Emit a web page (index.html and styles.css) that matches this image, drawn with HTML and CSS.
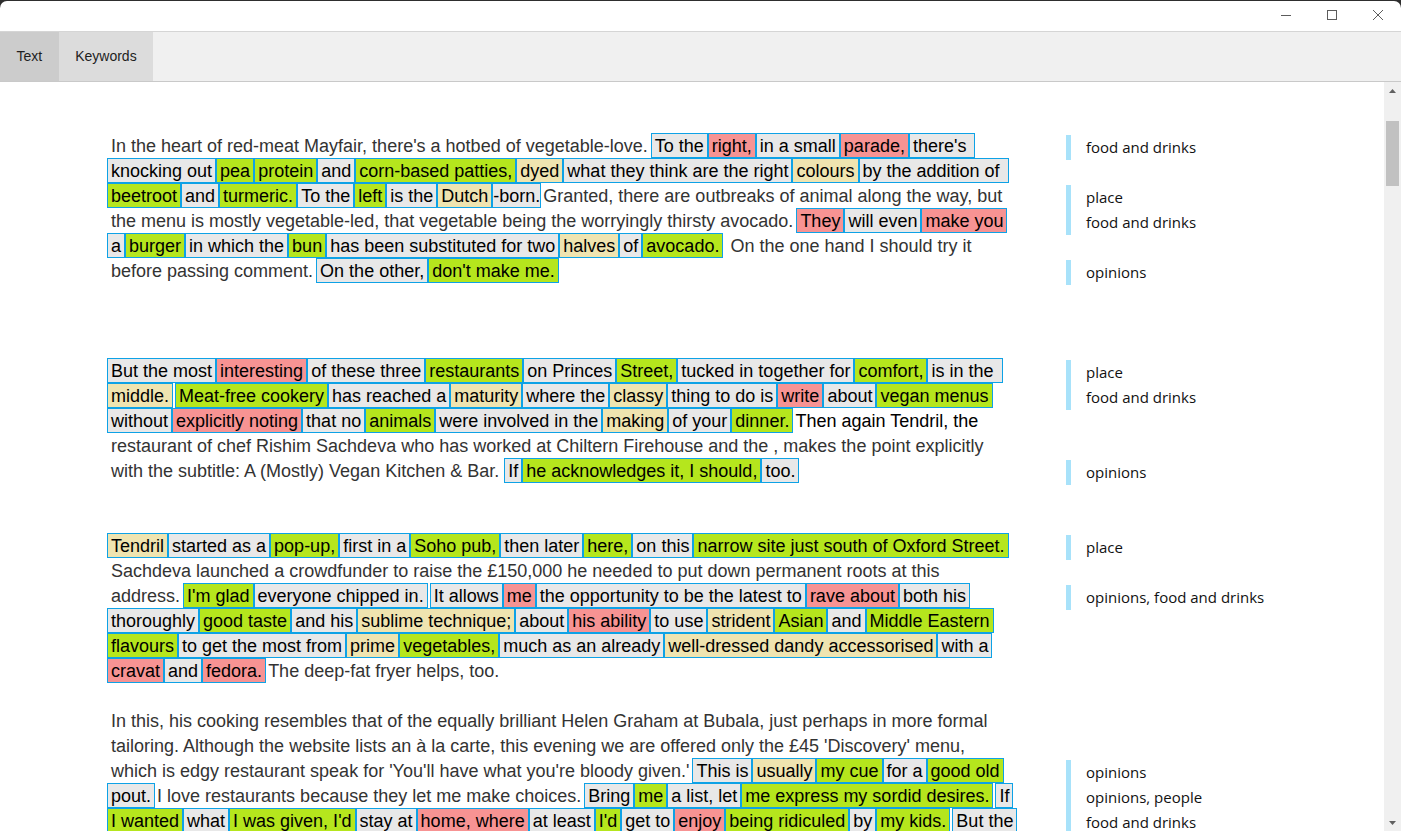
FILE: index.html
```html
<!DOCTYPE html>
<html lang="en">
<head>
<meta charset="utf-8">
<title>Text</title>
<link rel="stylesheet" href="styles.css">
</head>
<body>
<div class="window">
  <div class="titlebar">
    <div class="ctrl"><svg width="10" height="10" viewBox="0 0 10 10"><path d="M0 5.5H10" stroke="#5c5c5c" stroke-width="1" fill="none"/></svg></div>
    <div class="ctrl"><svg width="10" height="10" viewBox="0 0 10 10"><rect x="0.5" y="0.5" width="9" height="9" stroke="#5c5c5c" stroke-width="1" fill="none"/></svg></div>
    <div class="ctrl"><svg width="10" height="10" viewBox="0 0 10 10"><path d="M0 0L10 10M10 0L0 10" stroke="#5c5c5c" stroke-width="1" fill="none"/></svg></div>
  </div>
  <div class="tabs">
    <div class="tab active">Text</div>
    <div class="tab">Keywords</div>
  </div>
  <div class="main">
    <div class="doc">
      <div class="block gap3">
        <p class="text"><span class="p">In the heart of red-meat Mayfair, there's a hotbed of vegetable-love.</span><span class="s">To the</span><span class="r">right,</span><span class="s">in a small</span><span class="r">parade,</span><span class="s">there's&nbsp;</span><br><span class="s">knocking out</span><span class="g">pea</span><span class="g">protein</span><span class="s">and</span><span class="g">corn-based patties,</span><span class="y">dyed</span><span class="s">what they think are the right</span><span class="y">colours</span><span class="s">by the addition of&nbsp;</span><br><span class="g">beetroot</span><span class="s">and</span><span class="g">turmeric.</span><span class="s">To the</span><span class="g">left</span><span class="s">is the</span><span class="y">Dutch</span><span class="s tight">-born.</span><span class="p">Granted, there are outbreaks of animal along the way, but</span><br><span class="p">the menu is mostly vegetable-led, that vegetable being the worryingly thirsty avocado.</span><span class="r">They</span><span class="s">will even</span><span class="r">make you</span><br><span class="s">a</span><span class="g">burger</span><span class="s">in which the</span><span class="g">bun</span><span class="s">has been substituted for two</span><span class="y">halves</span><span class="s">of</span><span class="g">avocado.</span><span class="p">&nbsp;On the one hand I should try it</span><br><span class="p">before passing comment.</span><span class="s">On the other,</span><span class="g">don't make me.</span></p>
        <div class="tags">
          <div class="tag-group"><div class="tag">food and drinks</div></div>
          <div class="tag-group skip1"><div class="tag">place</div><div class="tag">food and drinks</div></div>
          <div class="tag-group skip1"><div class="tag">opinions</div></div>
        </div>
      </div>
      <div class="block gap2">
        <p class="text"><span class="s">But the most</span><span class="r">interesting</span><span class="s">of these three</span><span class="g">restaurants</span><span class="s">on Princes</span><span class="g">Street,</span><span class="s">tucked in together for</span><span class="g">comfort,</span><span class="s">is in the&nbsp;</span><br><span class="y">middle.</span><span class="g ns">Meat-free cookery</span><span class="s">has reached a</span><span class="y">maturity</span><span class="s">where the</span><span class="y">classy</span><span class="s">thing to do is</span><span class="r">write</span><span class="s">about</span><span class="g">vegan menus</span><br><span class="s">without</span><span class="r">explicitly noting</span><span class="s">that no</span><span class="g">animals</span><span class="s">were involved in the</span><span class="y">making</span><span class="s">of your</span><span class="g">dinner.</span><span class="p k">Then again Tendril, the</span><br><span class="p">restaurant of chef Rishim Sachdeva who has worked at Chiltern Firehouse and the , makes the point explicitly</span><br><span class="p">with the subtitle: A (Mostly) Vegan Kitchen &amp; Bar.</span><span class="s ns">If</span><span class="g">he acknowledges it, I should,</span><span class="s">too.</span></p>
        <div class="tags">
          <div class="tag-group"><div class="tag">place</div><div class="tag">food and drinks</div></div>
          <div class="tag-group skip2"><div class="tag">opinions</div></div>
        </div>
      </div>
      <div class="block gap1">
        <p class="text"><span class="y">Tendril</span><span class="s">started as a</span><span class="g">pop-up,</span><span class="s">first in a</span><span class="g">Soho pub,</span><span class="s">then later</span><span class="g">here,</span><span class="s">on this</span><span class="g">narrow site just south of Oxford Street.</span><br><span class="p">Sachdeva launched a crowdfunder to raise the £150,000 he needed to put down permanent roots at this</span><br><span class="p">address.</span><span class="g">I'm glad</span><span class="s">everyone chipped in.</span><span class="s ns">It allows</span><span class="r">me</span><span class="s">the opportunity to be the latest to</span><span class="r">rave about</span><span class="s">both his</span><br><span class="s">thoroughly</span><span class="g">good taste</span><span class="s">and his</span><span class="y">sublime technique;</span><span class="s">about</span><span class="r">his ability</span><span class="s">to use</span><span class="y">strident</span><span class="g">Asian</span><span class="s">and</span><span class="g">Middle Eastern</span><br><span class="g">flavours</span><span class="s">to get the most from</span><span class="y">prime</span><span class="g">vegetables,</span><span class="s">much as an already</span><span class="y">well-dressed dandy accessorised</span><span class="s">with a</span><br><span class="r">cravat</span><span class="s">and</span><span class="r">fedora.</span><span class="p">The deep-fat fryer helps, too.</span></p>
        <div class="tags">
          <div class="tag-group"><div class="tag">place</div></div>
          <div class="tag-group skip1"><div class="tag">opinions, food and drinks</div></div>
        </div>
      </div>
      <div class="block">
        <p class="text"><span class="p">In this, his cooking resembles that of the equally brilliant Helen Graham at Bubala, just perhaps in more formal</span><br><span class="p">tailoring. Although the website lists an à la carte, this evening we are offered only the £45 'Discovery' menu,</span><br><span class="p">which is edgy restaurant speak for 'You'll have what you're bloody given.'</span><span class="s">This is</span><span class="y">usually</span><span class="g">my cue</span><span class="s">for a</span><span class="g">good old</span><br><span class="s">pout.</span><span class="p">I love restaurants because they let me make choices.</span><span class="s">Bring</span><span class="g">me</span><span class="s">a list, let</span><span class="g">me express my sordid desires.</span><span class="s ns">If</span><br><span class="g">I wanted</span><span class="s">what</span><span class="g">I was given, I'd</span><span class="s">stay at</span><span class="r">home, where</span><span class="s">at least</span><span class="g">I'd</span><span class="s">get to</span><span class="r">enjoy</span><span class="g">being ridiculed</span><span class="s">by</span><span class="g">my kids.</span><span class="s ns">But the</span></p>
        <div class="tags">
          <div class="tag-group skip2"><div class="tag">opinions</div><div class="tag">opinions, people</div><div class="tag">food and drinks</div></div>
        </div>
      </div>
    </div>
    <div class="scrollbar">
      <div class="sb-btn"><svg width="7" height="4" viewBox="0 0 7 4"><path d="M3.5 0L7 4H0Z" fill="#606060"/></svg></div>
      <div class="sb-thumb"></div>
      <div class="sb-track"></div>
      <div class="sb-btn"><svg width="7" height="4" viewBox="0 0 7 4"><path d="M0 0H7L3.5 4Z" fill="#606060"/></svg></div>
    </div>
  </div>
</div>
</body>
</html>
```
FILE: styles.css
```css
html, body {
  margin: 0;
  padding: 0;
}
body {
  background: #2e2e2e;
  font-family: "Liberation Sans", Arial, sans-serif;
  overflow: hidden;
}
.window {
  margin-top: 1px;
  height: 830px;
  background: #ffffff;
  border-radius: 7px 7px 0 0;
  overflow: hidden;
  display: flex;
  flex-direction: column;
}
.titlebar {
  height: 30px;
  box-sizing: border-box;
  padding-bottom: 2px;
  display: flex;
  justify-content: flex-end;
  flex-shrink: 0;
}
.ctrl {
  width: 46px;
  display: flex;
  align-items: center;
  justify-content: center;
}
.ctrl svg {
  display: block;
}
.tabs {
  height: 49px;
  border-top: 1px solid #d5d5d5;
  border-bottom: 1px solid #c9c9c9;
  background: #f0f0f0;
  display: flex;
  flex-shrink: 0;
}
.tab {
  padding: 0 16.5px 1px;
  display: flex;
  align-items: center;
  font-size: 14px;
  color: #1e1e1e;
  background: #dcdcdc;
}
.tab.active {
  background: #cccccc;
}
.main {
  flex: 1;
  min-height: 0;
  display: flex;
  overflow: hidden;
}
.doc {
  flex: 1;
  padding: 51px 0 0 107px;
  overflow: hidden;
}
.block {
  display: grid;
  grid-template-columns: 959px auto;
  align-items: start;
}
.gap3 { margin-bottom: 75px; }
.gap2 { margin-bottom: 50px; }
.gap1 { margin-bottom: 25px; }
.text {
  margin: 0;
  font-size: 18px;
  line-height: 25px;
  white-space: nowrap;
  color: #333333;
}
.text span {
  padding: 1.5px 3px;
  border: 1px solid #0ea2e6;
  color: #000000;
}
.text .s { background: #e8e8e8; }
.text .g { background: #b5e61d; }
.text .r { background: #f79393; }
.text .y { background: #efe4b0; }
.text .p {
  padding-left: 1px;
  padding-right: 2px;
  border-color: transparent;
  background: none;
  color: #333333;
}
.text .p:first-child,
.text br + .p {
  padding-left: 3px;
}
.text .p.k { color: #000000; }
.text .ns { margin-left: 2px; }
.text .tight { padding-left: 0; padding-right: 0; }
.tags {
  margin-top: 2px;
  margin-bottom: -2px;
  font-family: "Open Sans", "Noto Sans", sans-serif;
  font-size: 15px;
  color: #111111;
}
.tag-group {
  border-left: 5px solid #a8e2fa;
  padding-left: 15px;
}
.skip1 { margin-top: 25px; }
.skip2 { margin-top: 50px; }
.tag {
  height: 25px;
  line-height: 25px;
  white-space: nowrap;
}
.scrollbar {
  width: 17px;
  background: #f0f0f0;
  display: flex;
  flex-direction: column;
  flex-shrink: 0;
}
.sb-btn {
  height: 17px;
  display: flex;
  align-items: center;
  justify-content: center;
  flex-shrink: 0;
}
.sb-btn svg { display: block; }
.sb-thumb {
  margin: 22px 2px 0 2px;
  height: 65px;
  background: #c1c1c1;
  flex-shrink: 0;
}
.sb-track { flex: 1; }
```
